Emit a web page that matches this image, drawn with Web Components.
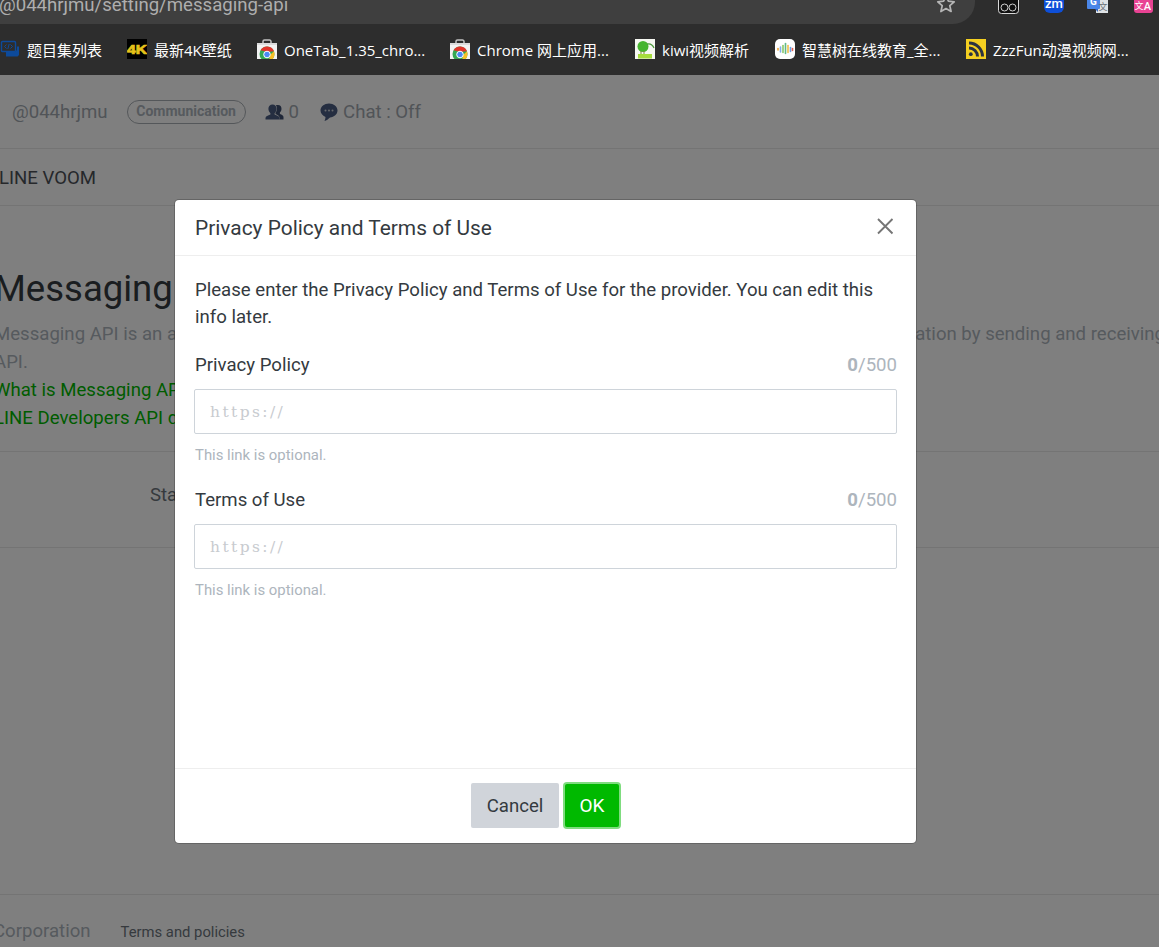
<!DOCTYPE html>
<html lang="en">
<head>
<meta charset="utf-8">
<title>Messaging API settings</title>
<style>
  html, body { margin: 0; padding: 0; height: 100%; }
  body { font-family: Roboto, "Noto Sans CJK SC", sans-serif; overflow: hidden; }
  app-shell { height: 947px; }
</style>
</head>
<body>
<template id="svg-bm-code"><svg width="20" height="20" viewBox="0 0 20 20"><rect x="1.5" y="2.5" width="14" height="10" rx="1" fill="none" stroke="#0d4a9a" stroke-width="1.4"/><path d="M6.5 5.5 4.5 7.5l2 2M10.5 5.5l2 2-2 2M9.2 5 7.800 10" fill="none" stroke="#0d4a9a" stroke-width="1"/><path d="M6 13h8.500l2.500-2V7.500h2V16l-1.500 1.500H6z" fill="#0d4a9a"/></svg></template>
<template id="svg-bm-4k"><svg width="20" height="20" viewBox="0 0 20 20"><rect width="20" height="20" fill="#000"/><text x="10" y="14.500" text-anchor="middle" font-family="Liberation Sans" font-weight="700" font-size="12" textLength="20" lengthAdjust="spacingAndGlyphs" fill="#e6c21a" stroke="#e6c21a" stroke-width=".7">4K</text></svg></template>
<template id="svg-bm-store"><svg width="20" height="20" viewBox="0 0 20 20"><path d="M6 4V2.500A1.500 1.500 0 0 1 7.500 1h5A1.500 1.500 0 0 1 14 2.500V4" fill="none" stroke="#c4c4c4" stroke-width="1.500"/><path d="M0 4h20v16H0z" fill="#f3f3f3"/><path d="M0 4h20v2H0z" fill="#dcdcdc"/><circle cx="10" cy="15" r="7.500" fill="#34a853"/><path d="M3.500 11.300A7.500 7.500 0 0 1 17 12.300L10 13z" fill="#e0342b"/><path d="M17 12.300A7.500 7.500 0 0 1 12 22.300L13 16z" fill="#f6c026"/><circle cx="10" cy="15.500" r="3.300" fill="#4a8af4" stroke="#fff" stroke-width="1"/><rect y="20" width="20" height="3" fill="#2d2d2d"/></svg></template>
<template id="svg-bm-kiwi"><svg width="20" height="20" viewBox="0 0 20 20"><rect width="20" height="20" fill="#f6f8f2"/><ellipse cx="8" cy="7.500" rx="5.500" ry="5.500" fill="#46b52f"/><path d="M12 5q5-1 7 4" fill="none" stroke="#4d9a3c" stroke-width="1.200"/><path d="M6 12v3M9 12v3" stroke="#7a8a30" stroke-width="1"/><rect x="3" y="15" width="14" height="4.500" fill="#a6dc3c"/></svg></template>
<template id="svg-bm-bars"><svg width="20" height="20" viewBox="0 0 20 20"><rect width="20" height="20" rx="5" fill="#fff"/><g stroke-width="1.600" stroke-linecap="round"><path d="M3 9.500v1.500" stroke="#f0a73a"/><path d="M5.500 8v5" stroke="#7fb0e8"/><path d="M8 6.500v7" stroke="#8cc866"/><path d="M10.500 4.500v10" stroke="#62b98a"/><path d="M13 6.500v7" stroke="#f1c04a"/><path d="M15.500 8.500v4" stroke="#6fa1e6"/><path d="M17.500 9.500v2" stroke="#e8604f"/></g></svg></template>
<template id="svg-bm-rss"><svg width="20" height="20" viewBox="0 0 20 20"><rect width="20" height="20" fill="#f4cf21"/><circle cx="4.800" cy="15.200" r="1.900" fill="#2c3340"/><path d="M3 9a8.500 8.500 0 0 1 8.500 8.500M3 4A13.500 13.500 0 0 1 16.500 17.500" fill="none" stroke="#2c3340" stroke-width="3"/></svg></template>

<template id="t-shell">
  <style>
    :host { display: flex; flex-direction: column; width: 1159px; overflow: hidden; }
    .page { position: relative; flex: 1; min-height: 0; overflow: hidden; background: #fff; }
    .scrim { position: absolute; inset: 0; background: rgba(0,0,0,.5); }
  </style>
  <browser-toolbar></browser-toolbar>
  <bookmark-bar></bookmark-bar>
  <div class="page">
    <channel-page></channel-page>
    <div class="scrim"></div>
    <privacy-modal></privacy-modal>
  </div>
</template>

<template id="t-toolbar">
  <style>
    :host { display: flex; height: 24px; overflow: hidden; background: #2d2d2d; align-items: flex-end; }
    .omni { flex: none; width: 975px; height: 24px; background: #3f3f3f; border-bottom-right-radius: 22px;
      display: flex; justify-content: space-between; overflow: hidden; position: relative; }
    .url { font: 18.6px/24px Roboto, sans-serif; color: #aeaeae; margin: -7px 0 0 -1px; white-space: nowrap; }
    .star { flex: none; margin: -6px 19px 0 0; display: block; }
    .ext { flex: none; display: block; margin-bottom: 11px; }
  </style>
  <div class="omni">
    <span class="url">@044hrjmu/setting/messaging-api</span>
    <svg class="star" width="20" height="20" viewBox="0 0 20 20"><path d="M10 1.800l2.400 5.400 5.800.6-4.400 3.900 1.300 5.800-5.100-3-5.100 3 1.300-5.800L1.800 7.800l5.800-.6z" fill="none" stroke="#b5b5b5" stroke-width="1.700" stroke-linejoin="round"/></svg>
  </div>
  <svg class="ext" style="margin-left:23px;margin-bottom:10px" width="21" height="21" viewBox="0 0 21 21"><rect x=".5" y=".5" width="20" height="20" rx="3" fill="#111" stroke="#d8d8d8"/><circle cx="6.500" cy="14.500" r="3.500" fill="none" stroke="#cfcfcf"/><circle cx="14.500" cy="14.500" r="3.500" fill="none" stroke="#cfcfcf"/></svg>
  <svg class="ext" style="margin-left:25px" width="20" height="20" viewBox="0 0 20 20"><rect width="20" height="20" rx="6" fill="#0e4fd8"/><text x="10" y="15" text-anchor="middle" font-family="Roboto" font-weight="500" font-size="13" fill="#fff">zm</text></svg>
  <svg class="ext" style="margin-left:23px" width="21" height="20" viewBox="0 0 21 20"><rect x="9" y="3" width="12" height="17" fill="#dfe3e6"/><rect width="13" height="16" rx="1" fill="#4a86e8"/><path d="M8 16l3 3v-3z" fill="#3367c7"/><text x="6.500" y="12" text-anchor="middle" font-family="Roboto" font-weight="700" font-size="10" fill="#fff">G</text><text x="16" y="17" text-anchor="middle" font-family="Noto Sans CJK SC" font-size="9" fill="#6c7177">文</text></svg>
  <svg class="ext" style="margin-left:26px" width="19" height="20" viewBox="0 0 19 20"><rect width="19" height="20" rx="3" fill="#e84393"/><text x="5" y="16" text-anchor="middle" font-family="Noto Sans CJK SC" font-size="9" fill="#fff">文</text><text x="13.500" y="17" text-anchor="middle" font-family="Roboto" font-weight="500" font-size="11" fill="#fff">A</text></svg>
</template>

<template id="t-bar">
  <style>
    :host { display: flex; height: 51px; background: #2d2d2d; align-items: center; gap: 25px; overflow: hidden; }
  </style>
  <bm-item icon="code" w="75">题目集列表</bm-item>
  <bm-item icon="4k" w="78">最新4K壁纸</bm-item>
  <bm-item icon="store" w="141">OneTab_1.35_chro...</bm-item>
  <bm-item icon="store" w="133">Chrome 网上应用...</bm-item>
  <bm-item icon="kiwi" w="88">kiwi视频解析</bm-item>
  <bm-item icon="bars" w="139">智慧树在线教育_全...</bm-item>
  <bm-item icon="rss" w="136">ZzzFun动漫视频网...</bm-item>
</template>

<template id="t-item">
  <style>
    :host { display: inline-flex; flex: none; align-items: center; gap: 7px; height: 24px; }
    .ic { display: flex; width: 20px; height: 20px; align-items: center; justify-content: center; flex: none; margin-top: -1px; }
    .lb { font: 15px/24px "Open Sans", "Noto Sans CJK SC", sans-serif; color: #fff; white-space: nowrap; }
  </style>
  <span class="ic"></span><span class="lb"><slot></slot></span>
</template>

<template id="t-page">
  <style>
    :host { display: flex; flex-direction: column; height: 100%; font: 18.6px/28px Roboto, sans-serif; color: #343a40; }
    .meta { flex: none; height: 73px; border-bottom: 1px solid #e8e8e8; display: flex; align-items: center; padding-left: 12px; color: #a2a9b0; white-space: nowrap; }
    .id { margin-right: 19px; }
    .badge { box-sizing: border-box; height: 24px; width: 119px; border: 1px solid #a8aeb4; border-radius: 12px; font: 700 14px/20px Roboto, sans-serif; color: #adb5bd; text-align: center; margin-right: 19px; }
    .stat { display: inline-flex; align-items: center; }
    .stat svg { display: block; flex: none; }
    .tabs { flex: none; height: 55px; padding: 1px 0 0; margin-left: -1px; border-bottom: 1px solid #e8e8e8; display: flex; align-items: center; color: #4c5157; }
    .sec { flex: none; height: 245px; border-bottom: 1px solid #e8e8e8; overflow: hidden; white-space: nowrap; }
    h1 { margin: 61px 0 9px -6px; font: 400 36.500px/44px Roboto, sans-serif; color: #343a40; }
    .ln { display: flex; height: 28px; margin-left: -6px; color: #adb5bd; }
    .ln .r { margin-left: auto; margin-right: -6px; }
    .ln a { color: #00b900; text-decoration: none; }
    .row { flex: none; height: 96px; border-bottom: 1px solid #e8e8e8; padding: 29px 0 0 150px; box-sizing: border-box; color: #6c757d; }
    .grow { flex: 1; }
    footer { flex: none; height: 53px; box-sizing: border-box; border-top: 1px solid #e8e8e8; padding-top: 22px; display: flex; align-items: baseline; white-space: nowrap; }
    .corp { color: #adb5bd; margin-left: -7px; }
    .terms { font-size: 14.800px; color: #6c757d; margin-left: 30px; }
  </style>
  <div class="meta">
    <span class="id">@044hrjmu</span>
    <span class="badge">Communication</span>
    <span class="stat" style="margin-right:21px">
      <svg width="20" height="18" viewBox="0 0 20 18" style="margin-right:4px"><path d="M13 2c2.300 0 3.500 1.700 3.500 3.800 0 1.600-.7 3-1.600 3.800v1.300c1.900.7 3.600 1.500 3.600 3.100V16.500h-4v-1.700c0-1.600-1.900-2.800-4-3.700V9.600c1-1 1.400-2.400 1.400-4 0-1.400-.4-2.600-1.100-3.300.5-.2 1.100-.3 2.200-.3z" fill="#3f4f70"/><path d="M7.500 1.500C10 1.500 11.600 3.300 11.600 5.800c0 1.900-.8 3.400-2 4.400v1.400c2.400.8 4.900 1.800 4.900 3.500v1.400H.5V15.100c0-1.700 2.500-2.700 4.900-3.500v-1.400c-1.200-1-2-2.500-2-4.400C3.400 3.300 5 1.500 7.500 1.500z" fill="#4a5c82"/></svg>
      <span>0</span>
    </span>
    <span class="stat">
      <svg width="18" height="20" viewBox="0 0 18 20" style="margin-right:5px"><path d="M9 1.500c4.700 0 8.500 3 8.500 7 0 3.800-3.400 6.600-7.500 6.900-1.500 1.500-3.600 3-5.500 3.600.6-1.200 1-2.700 1-4.100C2.500 13.700.5 11.300.5 8.500c0-4 3.800-7 8.500-7z" fill="#4a5c82"/><circle cx="5.500" cy="8.500" r="1" fill="#cfd3da"/><circle cx="9" cy="8.500" r="1" fill="#cfd3da"/><circle cx="12.500" cy="8.500" r="1" fill="#cfd3da"/></svg>
      <span>Chat : Off</span>
    </span>
  </div>
  <div class="tabs"><span>LINE VOOM</span></div>
  <div class="sec">
    <h1>Messaging API</h1>
    <div class="ln"><span>Messaging API is an a</span><span class="r">ation by sending and receiving</span></div>
    <div class="ln">API.</div>
    <div class="ln"><a>What is Messaging API</a></div>
    <div class="ln"><a>LINE Developers API d</a></div>
  </div>
  <div class="row">Sta</div>
  <div class="grow"></div>
  <footer><span class="corp">Corporation</span><span class="terms">Terms and policies</span></footer>
</template>

<template id="t-modal">
  <style>
    :host { position: absolute; left: 175px; top: 125px; width: 741px; height: 643px; box-sizing: border-box; display: flex; flex-direction: column;
      background: #fff; border-radius: 4px; box-shadow: 0 0 0 1px rgba(0,0,0,.2); font: 18.6px/27px Roboto, sans-serif; color: #343a40; overflow: hidden; }
    header { flex: none; height: 55px; border-bottom: 1px solid #eee; display: flex; align-items: center; justify-content: space-between; padding: 0 22px 0 20px; }
    h2 { margin: 0; font: 400 20.900px/30px Roboto, sans-serif; }
    header svg { display: block; margin-top: -3px; }
    main { flex: 1; min-height: 0; padding: 21px 19px 0; display: flex; flex-direction: column; gap: 21px; }
    p { margin: 0 0 0 1px; }
    footer { flex: none; height: 75px; box-sizing: border-box; border-top: 1px solid #eee; display: flex; justify-content: center; align-items: center; gap: 4px; padding: 0 1px 1px 0; }
  </style>
  <header>
    <h2>Privacy Policy and Terms of Use</h2>
    <svg width="18" height="18" viewBox="0 0 18 18"><path d="M2 2l14.500 14.500M16.500 2 2 16.500" stroke="#757575" stroke-width="1.900" fill="none"/></svg>
  </header>
  <main>
    <p>Please enter the Privacy Policy and Terms of Use for the provider. You can edit this info later.</p>
    <link-field label="Privacy Policy"></link-field>
    <link-field label="Terms of Use"></link-field>
  </main>
  <footer>
    <app-button>Cancel</app-button>
    <app-button primary>OK</app-button>
  </footer>
</template>

<template id="t-field">
  <style>
    :host { display: block; height: 114px; }
    .top { display: flex; justify-content: space-between; align-items: center; height: 27px; padding: 0 0 0 1px; }
    .count { color: #adb5bd; }
    .count b { font-weight: 700; }
    input { display: block; box-sizing: border-box; width: 703px; height: 45px; margin: 10px 0 0; padding: 0 15px; border: 1px solid #ced4da; border-radius: 2px; background: #fff; outline: none; font: 15.500px "DejaVu Serif", serif; letter-spacing: 2.400px; color: #343a40; }
    input::placeholder { color: #c8cbcf; opacity: 1; }
    .help { margin: 11px 0 0 1px; font: 14.900px/21px Roboto, sans-serif; color: #adb5bd; }
  </style>
  <div class="top"><span class="lb"></span><span class="count"><b>0</b>/500</span></div>
  <input type="text" placeholder="https://">
  <div class="help">This link is optional.</div>
</template>

<template id="t-btn">
  <style>
    :host { display: inline-flex; align-items: center; justify-content: center; box-sizing: border-box; height: 45px; width: 88px; padding-top: 1px; background: #d0d4da; color: #343a40; border-radius: 2px; font: 18.6px/27px Roboto, sans-serif; }
    :host([primary]) { width: 54px; height: 43px; padding-top: 0; background: #00b900; color: #fff; box-shadow: 0 0 0 2px #7fdc7f; border-radius: 2px; margin-left: 2px; font-size: 19px; }
  </style>
  <slot></slot>
</template>

<script>
  const make = (name, tpl, setup) => customElements.define(name, class extends HTMLElement {
    constructor() {
      super();
      this.attachShadow({ mode: 'open' }).appendChild(document.getElementById(tpl).content.cloneNode(true));
    }
    connectedCallback() { if (setup) setup(this, this.shadowRoot); }
  });
  make('browser-toolbar', 't-toolbar');
  make('bookmark-bar', 't-bar');
  make('bm-item', 't-item', (el, root) => {
    root.querySelector('.ic').appendChild(document.getElementById('svg-bm-' + el.getAttribute('icon')).content.cloneNode(true));
    root.querySelector('.lb').style.width = el.getAttribute('w') + 'px';
  });
  make('channel-page', 't-page');
  make('privacy-modal', 't-modal');
  make('link-field', 't-field', (el, root) => { root.querySelector('.lb').textContent = el.getAttribute('label'); });
  make('app-button', 't-btn');
  make('app-shell', 't-shell');
</script>
<app-shell></app-shell>
</body>
</html>
